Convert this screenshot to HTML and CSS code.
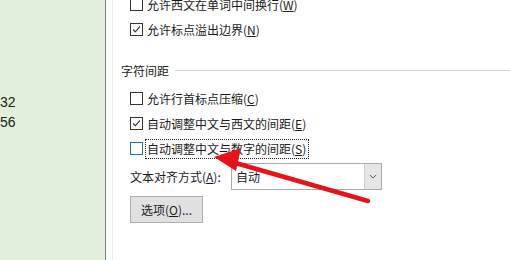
FILE: index.html
```html
<!DOCTYPE html>
<html lang="zh-CN">
<head>
    <meta charset="UTF-8">
    <title>段落 - 中文版式</title>
    <link rel="stylesheet" href="styles.css">
</head>
<body>
    <div class="screen">
        <div class="sheet">
            <div class="cell">32</div>
            <div class="cell">56</div>
        </div>
        <div class="gutter"></div>
        <div class="dialog">
            <div class="group first">
                <label class="check-row"><span class="box"></span><span class="text">允许西文在单词中间换行(<u>W</u>)</span></label>
                <label class="check-row"><span class="box checked"><svg viewBox="0 0 13 13"><path d="M2.5 6.5 L5.2 9.2 L10.5 3.2" /></svg></span><span class="text">允许标点溢出边界(<u>N</u>)</span></label>
            </div>

            <div class="heading">
                <span>字符间距</span>
                <div class="rule"></div>
            </div>

            <div class="group">
                <label class="check-row"><span class="box"></span><span class="text">允许行首标点压缩(<u>C</u>)</span></label>
                <label class="check-row"><span class="box checked"><svg viewBox="0 0 13 13"><path d="M2.5 6.5 L5.2 9.2 L10.5 3.2" /></svg></span><span class="text">自动调整中文与西文的间距(<u>E</u>)</span></label>
                <label class="check-row"><span class="box hover"></span><span class="text focus">自动调整中文与数字的间距(<u>S</u>)</span></label>

                <div class="align-row">
                    <span class="align-label">文本对齐方式(<u>A</u>):</span>
                    <div class="select">
                        <span class="select-value">自动</span>
                        <span class="select-arrow"><svg viewBox="0 0 10 6"><path d="M1 1 L5 5 L9 1" /></svg></span>
                    </div>
                </div>

                <button class="btn">选项(<u>O</u>)...</button>
            </div>
        </div>

        <!-- red arrow pointing at the option -->
        <svg class="arrow" width="510" height="260" viewBox="0 0 510 260">
            <path d="M368 201 L232 162" stroke="#e5141b" stroke-width="4.5" stroke-linecap="round" fill="none" />
            <path d="M214 157 L241 148 L236 171 Z" fill="#e5141b" />
        </svg>
    </div>
</body>
</html>
```

FILE: styles.css
```css
body {
    margin: 0;
    background: #fff;
    font-family: "Noto Sans CJK SC", "Noto Sans", sans-serif;
    font-size: 12px;
    color: #1a1a1a;
}
.screen {
    position: relative;
    display: flex;
    width: 510px;
    height: 260px;
    overflow: hidden;
}
.sheet {
    width: 106px;
    background: #e2efda;
    border-right: 1px solid #7d7d7d;
    padding-top: 92px;
    box-sizing: border-box;
    flex-shrink: 0;
}
.sheet .cell {
    font-family: "Liberation Sans", Arial, sans-serif;
    font-size: 14px;
    height: 20px;
    line-height: 20px;
    color: #222;
}
.gutter {
    width: 6px;
    border-right: 1px solid #ececec;
    flex-shrink: 0;
}
.dialog {
    width: 394px;
    border-right: 1px solid #d4d4d4;
    flex-shrink: 0;
    padding-left: 8px;
}
.group {
    padding-left: 9px;
}
.group.first {
    margin-top: -8px;
}
.check-row {
    display: flex;
    align-items: center;
    height: 25px;
}
.box {
    width: 11px;
    height: 11px;
    border: 1px solid #333;
    background: #fff;
    margin-right: 4px;
    flex-shrink: 0;
}
.box svg {
    display: block;
    width: 11px;
    height: 11px;
}
.box svg path {
    fill: none;
    stroke: #222;
    stroke-width: 1.3;
}
.box.hover {
    border-color: #1d6fc4;
    margin-right: 2px;
}
.text {
    line-height: 18px;
    white-space: nowrap;
}
.text.focus {
    border: 1px dotted #222;
    padding: 0 2px 0 1px;
}
.heading {
    display: flex;
    align-items: center;
    height: 22px;
    margin-top: 17px;
    margin-bottom: 5px;
}
.heading span {
    color: #222;
}
.heading .rule {
    flex: 1;
    height: 1px;
    background: #d6d6d6;
    margin-left: 6px;
    margin-right: 4px;
}
.align-row {
    display: flex;
    align-items: center;
    margin-top: 2px;
}
.align-label {
    width: 101px;
}
.select {
    display: flex;
    width: 149px;
    height: 25px;
    border: 1px solid #a9a9a9;
    background: #fff;
}
.select-value {
    flex: 1;
    line-height: 25px;
    padding-left: 4px;
}
.select-arrow {
    width: 16px;
    background: #e6e6e6;
    border-left: 1px solid #cfcfcf;
    display: flex;
    align-items: center;
    justify-content: center;
}
.select-arrow svg {
    width: 8px;
    height: 5px;
}
.select-arrow svg path {
    fill: none;
    stroke: #555;
    stroke-width: 1.2;
}
.btn {
    display: block;
    margin-top: 6px;
    width: 73px;
    height: 27px;
    background: #e1e1e1;
    border: 1px solid #adadad;
    font-family: inherit;
    font-size: 12px;
    color: #1a1a1a;
    padding: 0;
}
.arrow {
    position: absolute;
    left: 0;
    top: 0;
    pointer-events: none;
}
```
